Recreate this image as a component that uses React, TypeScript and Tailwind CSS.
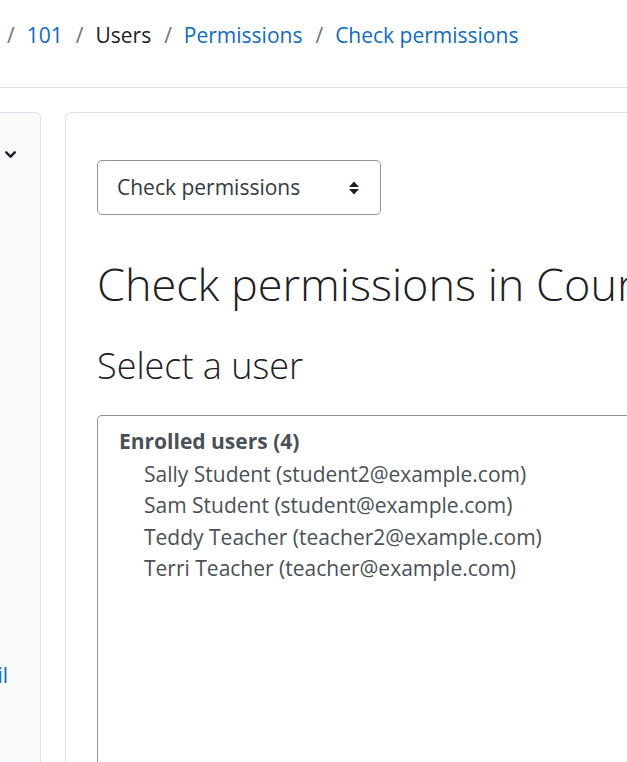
import { ChevronDown } from "lucide-react";

const crumbs = [
  { label: "101", link: true },
  { label: "Users", link: false },
  { label: "Permissions", link: true },
  { label: "Check permissions", link: true },
];

const users = [
  "Sally Student (student2@example.com)",
  "Sam Student (student@example.com)",
  "Teddy Teacher (teacher2@example.com)",
  "Terri Teacher (teacher@example.com)",
];

function SortIcon() {
  return (
    <svg width="12" height="16" viewBox="0 0 12 16" className="text-[#1d2125]">
      <path d="M6 1.5 11 7H1z M1 9h10l-5 5.5z" fill="currentColor" />
    </svg>
  );
}

export default function App() {
  return (
    <div className="h-[762px] w-[627px] overflow-hidden bg-white font-['Open_Sans',sans-serif] text-[21px] text-[#1d2125]">
      <nav className="flex h-[88px] items-start gap-[13px] border-b border-[#dee2e6] pl-[7px] pt-[20px] leading-[30px]">
        {crumbs.map((c) => (
          <div key={c.label} className="flex gap-[12px]">
            <span className="text-[#6a737b]">/</span>
            <span className={c.link ? "text-[#0f6cbf]" : "text-[#1d2125]"}>{c.label}</span>
          </div>
        ))}
      </nav>

      <div className="flex h-full pt-[24px]">
        <aside className="relative w-[41px] shrink-0 rounded-tr-[6px] border-r border-t border-[#dee2e6] bg-[#f8f9fa]">
          <div className="pl-[2px] pt-[33px]">
            <ChevronDown size={17} strokeWidth={3.5} className="text-[#1d2125]" />
          </div>
          <div className="mt-[497px] flex w-[8px] justify-end overflow-hidden whitespace-nowrap text-[#0f6cbf]">
            Detail
          </div>
        </aside>

        <main className="ml-[24px] flex-1 rounded-tl-[6px] border-l border-t border-[#dee2e6] pl-[31px] pt-[47px]">
          <div className="flex h-[55px] w-[284px] items-center justify-between rounded-[5px] border border-[#8f959e] pl-[19px] pr-[20px] text-[#343a40]">
            <span>Check permissions</span>
            <SortIcon />
          </div>

          <h2 className="mt-[42px] whitespace-nowrap text-[45px] font-light leading-[53px] text-[#1d2125]">
            Check permissions in Course: 101
          </h2>

          <h3 className="mt-[34px] text-[36px] font-light leading-[43px] text-[#1d2125]">Select a user</h3>

          <div className="mt-[28px] h-[400px] rounded-tl-[5px] border-l border-t border-[#8f959e] pl-[21px] pt-[9px] text-[#495057]">
            <div className="h-[34px] font-bold leading-[32px]">Enrolled users (4)</div>
            {users.map((u) => (
              <div key={u} className="h-[31.3px] whitespace-nowrap pl-[25px] leading-[31.3px]">
                {u}
              </div>
            ))}
          </div>
        </main>
      </div>
    </div>
  );
}
